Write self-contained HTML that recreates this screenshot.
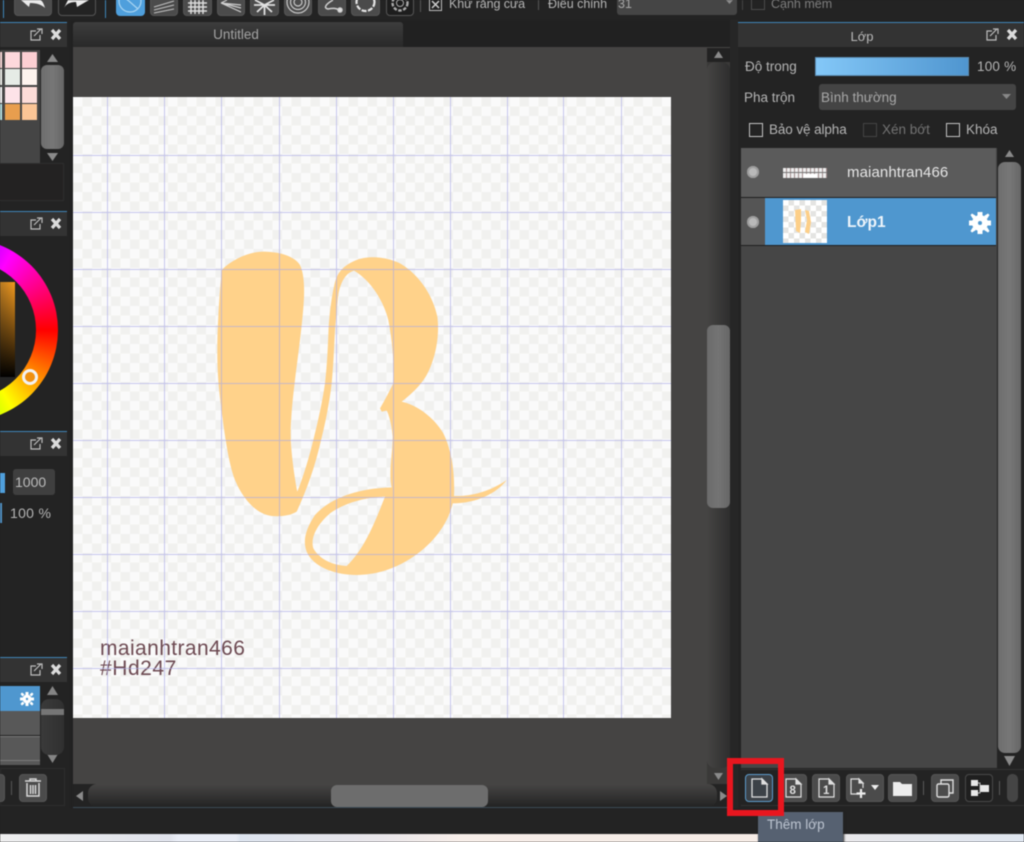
<!DOCTYPE html>
<html><head><meta charset="utf-8"><style>
html,body{margin:0;padding:0;background:#212121;width:1024px;height:842px;overflow:hidden}
body{position:relative;font-family:"Liberation Sans",sans-serif;color:#b5b5b5;font-size:13.5px;filter:blur(.45px)}
.a,.t,.b{position:absolute}
.t{white-space:nowrap;line-height:16px}
.b{background:#4b4b4b;border-radius:4px;box-sizing:border-box;border:1px solid #555}
.blue{position:absolute;height:1px;background:#3f85b8}
.hd{position:absolute;background:#333}
.sq{position:absolute;width:15px;height:16px}
svg{position:absolute;overflow:visible}
.cb{position:absolute;width:12px;height:12px;border:1px solid #c4c4c4;box-sizing:content-box}
</style></head><body>

<!-- top toolbar -->
<div class="a" style="left:0;top:0;width:1024px;height:20px;background:#232323"></div>
<div class="a" style="left:3px;top:0;width:1px;height:18px;background:#3f85b8"></div>
<div class="a" style="left:105px;top:0;width:1px;height:18px;background:#3f85b8"></div>
<div class="b" style="left:14px;top:-6px;width:38px;height:22px"></div>
<svg style="left:14px;top:0" width="38" height="16"><path d="M7 0 L15 7 L16 3 C23 3 28 5 31 8 C30 4 28 0 26 0 Z" fill="#eaeaea"/></svg>
<div class="b" style="left:58px;top:-6px;width:38px;height:22px;background:#232323"></div>
<svg style="left:58px;top:0" width="38" height="16"><path d="M6 8 C8 4 12 2 18 2 L19 7 L31 0 H10 Z" fill="#eaeaea"/></svg>
<div class="b" style="left:116px;top:-6px;width:29px;height:22px;background:#4f9fdc;border-color:#4f9fdc"></div>
<svg style="left:116px;top:0" width="29" height="16" fill="none" stroke="#a8d4f2" stroke-width="1.2"><circle cx="14" cy="1" r="11"/><path d="M6 -5 L22 9"/></svg>
<div class="b" style="left:150px;top:-6px;width:28px;height:22px"></div>
<svg style="left:150px;top:0" width="28" height="16" stroke="#c2c2c2" stroke-width="1.1"><path d="M4 7 L24 1 M4 10 L24 5 M4 13 L24 9"/></svg>
<div class="b" style="left:183px;top:-6px;width:29px;height:22px"></div>
<svg style="left:183px;top:0" width="29" height="16" stroke="#dcdcdc" stroke-width="1.5"><path d="M5 3 H24 M5 7 H24 M5 11 H24 M8 0 V14 M12 0 V14 M16 0 V14 M20 0 V14"/></svg>
<div class="b" style="left:217px;top:-6px;width:28px;height:22px"></div>
<svg style="left:217px;top:0" width="28" height="16" stroke="#cfcfcf" stroke-width="1.2"><path d="M4 3 L24 12 M4 3 L24 8 M4 3 L24 5 M10 0 L4 3"/></svg>
<div class="b" style="left:250px;top:-6px;width:29px;height:22px"></div>
<svg style="left:250px;top:0" width="29" height="16" stroke="#e0e0e0" stroke-width="1.8"><path d="M14.500 5 V15 M14.500 5 L5 0 M14.500 5 L24 0 M14.500 5 L7 12 M14.500 5 L22 12 M4 5 H25"/></svg>
<div class="b" style="left:284px;top:-6px;width:28px;height:22px"></div>
<svg style="left:284px;top:0" width="28" height="16" fill="none" stroke="#c8c8c8" stroke-width="1.2"><circle cx="14" cy="2" r="11"/><circle cx="14" cy="2" r="7.500"/><circle cx="14" cy="2" r="4"/></svg>
<div class="b" style="left:318px;top:-6px;width:28px;height:22px"></div>
<svg style="left:318px;top:0" width="28" height="16" fill="none" stroke="#d0d0d0" stroke-width="1.5"><path d="M15 0 C8 4 5 8 10 9 C15 8 18 8 21 10"/><circle cx="22" cy="10" r="2" fill="#e0e0e0"/></svg>
<div class="b" style="left:351px;top:-6px;width:29px;height:22px"></div>
<svg style="left:351px;top:0" width="29" height="16" fill="none" stroke="#e4e4e4" stroke-width="2.200" stroke-dasharray="5 1.500"><circle cx="14.500" cy="2" r="9"/></svg>
<div class="b" style="left:386px;top:-6px;width:28px;height:22px;background:#1d1d1d"></div>
<svg style="left:386px;top:0" width="28" height="16" fill="none" stroke="#aaa" stroke-width="2.400"><circle cx="14" cy="3" r="7.500" stroke-dasharray="3.500 1.500"/><circle cx="14" cy="3" r="3.500" stroke-width="1"/></svg>
<div class="a" style="left:420px;top:0;width:1px;height:12px;background:#555"></div>
<div class="a" style="left:429px;top:-2px;width:11px;height:11px;border:1px solid #bbb"></div>
<svg style="left:429px;top:-2px" width="13" height="13" stroke="#ccc" stroke-width="1.500"><path d="M3 3 L10 10 M10 3 L3 10"/></svg>
<div class="t" style="left:449px;top:-4px;font-size:12.500px;letter-spacing:-.1px">Khử răng cưa</div>
<div class="a" style="left:538px;top:0;width:1px;height:10px;background:#555"></div>
<div class="t" style="left:548px;top:-4px;font-size:12.500px">Điều chỉnh</div>
<div class="a" style="left:617px;top:-8px;width:120px;height:23px;background:#454545;border-radius:3px"></div>
<div class="t" style="left:618px;top:-4px;font-size:12.500px;color:#a8a8a8">31</div>
<svg style="left:725px;top:0" width="10" height="8"><path d="M1 0 H8 L4.500 4 Z" fill="#8a8a8a"/></svg>
<div class="a" style="left:742px;top:0;width:1px;height:10px;background:#444"></div>
<div class="a" style="left:751px;top:-4px;width:12px;height:12px;border:1px solid #4a4a4a"></div>
<div class="t" style="left:771px;top:-4px;font-size:12.500px;color:#7e7e7e">Cạnh mềm</div>

<!-- left panels -->
<div class="a" style="left:0;top:20px;width:70px;height:788px;background:#232323"></div>
<div class="blue" style="left:0;top:22px;width:67px"></div>
<div class="hd" style="left:0;top:23px;width:67px;height:24px"></div>
<div class="a" style="left:0;top:50px;width:40px;height:113px;background:#454545"></div>
<div class="sq" style="left:0;top:52px;width:2px;background:#fdd"></div>
<div class="sq" style="left:5px;top:52px;background:#fdd8dc"></div><div class="sq" style="left:22px;top:52px;background:#fccfd3"></div>
<div class="sq" style="left:0;top:69px;width:2px;background:#f4f4f0"></div>
<div class="sq" style="left:5px;top:69px;background:#e6ebe6"></div><div class="sq" style="left:22px;top:69px;background:#fdf3ee"></div>
<div class="sq" style="left:0;top:87px;width:2px;background:#fff"></div>
<div class="sq" style="left:5px;top:87px;background:#fde3e8"></div><div class="sq" style="left:22px;top:87px;background:#fcdcd8"></div>
<div class="sq" style="left:0;top:104px;width:2px;background:#b8e4e6"></div>
<div class="sq" style="left:5px;top:104px;background:#e89e4e"></div><div class="sq" style="left:22px;top:104px;background:#fbc596"></div>
<svg style="left:41px;top:50px" width="24" height="114" fill="#8a8a8a"><path d="M11.500 4 L17 12 H6 Z M6 103 H17 L11.500 111 Z"/></svg>
<div class="a" style="left:41px;top:65px;width:23px;height:84px;background:linear-gradient(90deg,#6e6e6e,#777 50%,#666);border-radius:6px"></div>
<div class="a" style="left:-2px;top:163px;width:66px;height:38px;background:#232222;border:1px solid #2e2e2e;box-sizing:border-box"></div>

<div class="blue" style="left:0;top:211px;width:67px"></div>
<div class="hd" style="left:0;top:212px;width:67px;height:24px"></div>
<div class="a" style="left:-124px;top:239px;width:182px;height:182px;border-radius:50%;background:conic-gradient(from 90deg,#f00,#ff0 60deg,#0f0 120deg,#0ff 180deg,#00f 240deg,#f0f 300deg,#f00 360deg)"></div>
<div class="a" style="left:-102px;top:261px;width:138px;height:138px;border-radius:50%;background:#232323"></div>
<div class="a" style="left:0;top:282px;width:15px;height:95px;background:linear-gradient(180deg,rgba(0,0,0,0),#000),linear-gradient(90deg,#b87a22,#f39a1e)"></div>
<div class="a" style="left:22px;top:369px;width:10px;height:10px;border:3px solid #f2f2f2;border-radius:50%;background:#f09010"></div>

<div class="blue" style="left:0;top:431px;width:67px"></div>
<div class="hd" style="left:0;top:432px;width:67px;height:24px"></div>
<div class="a" style="left:0;top:473px;width:5px;height:20px;background:#4f9fdc"></div>
<div class="a" style="left:13px;top:469px;width:42px;height:26px;background:#3f3f3f;border-radius:3px"></div>
<div class="t" style="left:15px;top:474px;font-size:14px;color:#bcbcbc">1000</div>
<div class="a" style="left:0;top:503px;width:2px;height:20px;background:#4f90c4"></div>
<div class="t" style="left:10px;top:505px;font-size:14px;letter-spacing:.3px">100 %</div>

<div class="blue" style="left:0;top:657px;width:67px"></div>
<div class="hd" style="left:0;top:658px;width:67px;height:24px"></div>
<div class="a" style="left:0;top:686px;width:40px;height:25px;background:#4f97cf"></div>
<div class="a" style="left:0;top:711px;width:40px;height:24px;background:#585858"></div>
<div class="a" style="left:0;top:736px;width:40px;height:24px;background:#585858;border-top:1px solid #7a7a7a;box-sizing:border-box"></div>
<div class="a" style="left:0;top:760px;width:40px;height:5px;background:#585858;border-top:1px solid #7a7a7a;box-sizing:border-box"></div>
<svg style="left:20px;top:692px" width="14" height="14"><g fill="#fff"><circle cx="7" cy="7" r="4.500"/><path d="M5.500 0 H8.500 V14 H5.500 Z M0 5.500 H14 V8.500 H0 Z M2 0.500 L4.500 2.500 L2.500 4.500 L0.500 2 Z M12 0.500 L13.500 2 L11.500 4.500 L9.500 2.500 Z M2 13.500 L0.500 12 L2.500 9.500 L4.500 11.500 Z M12 13.500 L9.500 11.500 L11.500 9.500 L13.500 12 Z"/></g><circle cx="7" cy="7" r="1.200" fill="#4f97cf"/></svg>
<svg style="left:41px;top:686px" width="24" height="80" fill="#858585"><path d="M11.500 0 L17 9 H6 Z M6 68 H17 L11.500 77 Z"/></svg>
<div class="a" style="left:41px;top:699px;width:23px;height:56px;background:linear-gradient(90deg,#3a3a3a,#303030);border-radius:8px"></div>
<div class="a" style="left:41px;top:709px;width:23px;height:6px;background:#767676"></div>
<div class="a" style="left:0;top:768px;width:65px;height:38px;border:1px solid #2d2d2d;box-sizing:border-box"></div>
<div class="b" style="left:-10px;top:774px;width:15px;height:28px"></div>
<div class="a" style="left:11px;top:781px;width:1px;height:14px;background:#555"></div>
<div class="b" style="left:19px;top:774px;width:28px;height:28px"></div>
<svg style="left:19px;top:774px" width="28" height="28" fill="none" stroke="#d8d8d8" stroke-width="1.500"><path d="M6 7 H22 M11 7 V5 H17 V7 M8 9 V22 H20 V9 M11.500 11 V20 M14 11 V20 M16.500 11 V20"/></svg>

<!-- header icons -->
<svg style="left:0;top:0" width="1024" height="700" fill="none">
<g stroke="#bdbdbd" stroke-width="1.200">
<path d="M36 31 H31 V40 H40 V35 M34 36 L41 29 M37 29 H42 V34"/>
<path d="M36 220 H31 V229 H40 V224 M34 225 L41 218 M37 218 H42 V223"/>
<path d="M36 440 H31 V449 H40 V444 M34 445 L41 438 M37 438 H42 V443"/>
<path d="M36 666 H31 V675 H40 V670 M34 671 L41 664 M37 664 H42 V669"/>
</g>
<g stroke="#dcdcdc" stroke-width="3.200">
<path d="M52 30 L60 39 M60 30 L52 39"/>
<path d="M52 219 L60 228 M60 219 L52 228"/>
<path d="M52 439 L60 448 M60 439 L52 448"/>
<path d="M52 665 L60 674 M60 665 L52 674"/>
</g>
</svg>

<!-- centre -->
<div class="a" style="left:73px;top:22px;width:330px;height:25px;background:linear-gradient(180deg,#3d3d3d,#292929);border-radius:3px 3px 0 0"></div>
<div class="t" style="left:73px;top:27px;width:326px;text-align:center;color:#a3a3a3;font-size:13.500px">Untitled</div>
<div class="a" style="left:73px;top:47px;width:657px;height:761px;background:#454443"></div>

<!-- canvas -->
<div class="a" style="left:73px;top:97px;width:598px;height:621px;background:repeating-conic-gradient(#f1f1ef 0 25%,#fafafa 0 50%) 0 0/19px 19px"></div>
<svg style="left:200px;top:240px" width="320" height="345" viewBox="0 0 960 1035">
<path fill-rule="evenodd" fill="#ffd28a" d="M65 90 C100 55 150 35 190 35 C240 35 285 50 300 75 C312 100 313 140 312 170 C310 230 295 340 285 420 C275 500 270 570 273 610 C276 660 285 720 292 755 C310 710 328 650 340 600 C355 540 368 480 375 430 C382 370 384 310 386 260 C390 210 395 170 402 140 C410 100 425 80 465 62 C500 45 560 50 600 70 C660 105 700 170 712 230 C720 290 705 360 680 405 C660 440 630 465 605 485 C650 495 700 530 730 580 C755 630 765 700 762 768 C810 770 870 755 920 720 C890 760 830 790 758 790 C745 850 700 910 640 950 C590 985 530 1005 470 1005 C410 1005 350 985 325 945 C305 910 315 870 345 825 C390 775 470 745 575 742 C565 700 578 640 578 590 C575 550 565 520 560 512 L545 515 L540 505 C555 480 570 450 580 430 C582 380 580 320 565 240 C550 180 510 120 462 92 C435 100 420 130 414 170 C410 210 408 240 405 270 C402 330 400 380 395 430 C388 490 376 550 362 605 C345 680 320 750 290 815 C270 828 240 830 215 828 C170 822 130 780 105 720 C85 670 72 570 62 490 C50 400 50 320 55 230 C58 170 62 130 65 90 Z M555 770 C520 860 490 930 440 978 C400 975 360 960 340 925 C330 890 355 850 390 820 C440 785 500 772 555 770 Z"/>
</svg>
<div class="t" style="left:100px;top:638px;font-size:21px;line-height:22px;color:#6d4a52;letter-spacing:.4px">maianhtran466</div>
<div class="t" style="left:100px;top:658px;font-size:21px;line-height:22px;color:#6d4a52;letter-spacing:.55px">#Hd247</div>
<svg style="left:73px;top:97px" width="598" height="621" stroke="#a8a8e6" stroke-opacity=".62" stroke-width="1">
<path d="M34.500 0V621M91.500 0V621M148.500 0V621M206.500 0V621M263.500 0V621M320.500 0V621M377.500 0V621M434.500 0V621M490.500 0V621M548.500 0V621M0 58.500H598M0 115.500H598M0 172.500H598M0 229.500H598M0 286.500H598M0 343.500H598M0 400.500H598M0 457.500H598M0 514.500H598M0 571.500H598"/>
</svg>

<!-- v scrollbar -->
<div class="a" style="left:707px;top:48px;width:23px;height:736px;background:#3a3938"></div>
<div class="a" style="left:707px;top:48px;width:23px;height:14px;background:#222"></div>
<div class="a" style="left:707px;top:62px;width:23px;height:706px;background:linear-gradient(90deg,#454443,#2e2e2e);border-radius:8px"></div>
<div class="a" style="left:707px;top:325px;width:23px;height:183px;background:linear-gradient(90deg,#6b6b6b,#747474 50%,#666);border-radius:6px"></div>
<svg style="left:707px;top:48px" width="23" height="736" fill="#8a8a8a"><path d="M11.500 3 L16 10 H7 Z M7 725 H16 L11.500 732 Z"/></svg>
<div class="a" style="left:730px;top:20px;width:8px;height:788px;background:#262626"></div>

<!-- h scrollbar -->
<div class="a" style="left:73px;top:784px;width:657px;height:24px;background:#232323;border-bottom:1px solid #3b4a55;box-sizing:border-box"></div>
<div class="a" style="left:88px;top:784px;width:629px;height:23px;background:linear-gradient(180deg,#464544,#232323);border-radius:9px"></div>
<div class="a" style="left:331px;top:785px;width:157px;height:22px;background:#6d6d6d;border-radius:6px"></div>
<svg style="left:73px;top:784px" width="657" height="24" fill="#8a8a8a"><path d="M3 12 L10 7 V17 Z M654 12 L647 7 V17 Z"/></svg>

<!-- right panel -->
<div class="a" style="left:738px;top:20px;width:286px;height:788px;background:#232323"></div>
<div class="blue" style="left:738px;top:22px;width:286px"></div>
<div class="hd" style="left:738px;top:23px;width:286px;height:24px"></div>
<div class="t" style="left:738px;top:29px;width:248px;text-align:center;font-size:13px;color:#bbb">Lớp</div>
<svg style="left:0;top:0" width="1024" height="60" fill="none"><path stroke="#bdbdbd" stroke-width="1.200" d="M992 31 H987 V40 H996 V35 M990 36 L997 29 M993 29 H998 V34"/><path stroke="#dcdcdc" stroke-width="3.200" d="M1008 30 L1016 39 M1016 30 L1008 39"/></svg>
<div class="t" style="left:745px;top:59px">Độ trong</div>
<div class="a" style="left:815px;top:57px;width:154px;height:19px;background:linear-gradient(90deg,#84c8f8,#4f95cf);box-shadow:inset 0 0 0 1px #5b8db3"></div>
<div class="t" style="left:977px;top:59px;letter-spacing:.2px">100 %</div>
<div class="t" style="left:744px;top:90px">Pha trộn</div>
<div class="a" style="left:819px;top:84px;width:197px;height:26px;background:#444;border-radius:3px"></div>
<div class="t" style="left:821px;top:90px;color:#a8a8a8">Bình thường</div>
<svg style="left:1001px;top:94px" width="12" height="8"><path d="M1 0 H10 L5.500 5 Z" fill="#888"/></svg>
<div class="cb" style="left:749px;top:123px"></div>
<div class="t" style="left:769px;top:122px;font-size:13.500px;letter-spacing:-.1px">Bảo vệ alpha</div>
<div class="cb" style="left:863px;top:123px;border-color:#444"></div>
<div class="t" style="left:882px;top:122px;color:#737373;font-size:13.500px">Xén bớt</div>
<div class="cb" style="left:946px;top:123px"></div>
<div class="t" style="left:966px;top:122px;font-size:13.500px">Khóa</div>

<div class="a" style="left:741px;top:148px;width:256px;height:620px;background:#464646"></div>
<div class="a" style="left:741px;top:148px;width:255px;height:49px;background:#5b5b5b"></div>
<div class="a" style="left:741px;top:197px;width:255px;height:1px;background:#1f1f1f"></div>
<div class="a" style="left:741px;top:198px;width:24px;height:47px;background:#555"></div>
<div class="a" style="left:765px;top:198px;width:231px;height:47px;background:#4f97cf"></div>
<div class="a" style="left:741px;top:245px;width:255px;height:1px;background:#1f1f1f"></div>
<div class="a" style="left:747px;top:166px;width:12px;height:12px;background:#b9b9b9;border-radius:50%;box-shadow:inset 0 0 0 2px #9d9d9d"></div>
<div class="a" style="left:747px;top:216px;width:12px;height:12px;background:#b9b9b9;border-radius:50%;box-shadow:inset 0 0 0 2px #9d9d9d"></div>
<div class="a" style="left:783px;top:168px;width:44px;height:10px;background:repeating-linear-gradient(90deg,#eee 0 3px,#a08a8a 3px 4px)"></div>
<div class="a" style="left:783px;top:172px;width:44px;height:1px;background:#777"></div>
<div class="a" style="left:803px;top:174px;width:14px;height:4px;background:#fff"></div>
<div class="t" style="left:847px;top:165px;font-size:15px;color:#e6e6e6;letter-spacing:.1px">maianhtran466</div>
<div class="a" style="left:783px;top:200px;width:44px;height:43px;background:repeating-conic-gradient(#e4e4e2 0 25%,#fff 0 50%) 0 0/11px 11px"></div>
<svg style="left:783px;top:200px" width="44" height="43" fill="#fdcf88"><path d="M12 10 L18 9 L18 20 L17 33 L13 31 Z M22 10 L26 11 L28 22 L26 34 L22 32 L24 20 Z"/></svg>
<div class="t" style="left:847px;top:215px;font-size:15.500px;font-weight:bold;color:#eef5fb">Lớp1</div>
<svg style="left:968px;top:211px" width="24" height="24"><g fill="#fff"><circle cx="12" cy="12" r="8"/><path d="M9.500 1 H14.500 V23 H9.500 Z M1 9.500 H23 V14.500 H1 Z M4 2.500 L8 5 L5 8 L2.500 4 Z M20 2.500 L21.500 4 L19 8 L16 5 Z M4 21.500 L2.500 20 L5 16 L8 19 Z M20 21.500 L16 19 L19 16 L21.500 20 Z"/></g><circle cx="12" cy="12" r="2" fill="#4f97cf"/></svg>

<div class="a" style="left:998px;top:162px;width:23px;height:591px;background:linear-gradient(90deg,#6e6e6e,#777 50%,#666);border-radius:7px"></div>
<svg style="left:998px;top:148px" width="23" height="622" fill="#8a8a8a"><path d="M11.500 2 L16 9 H7 Z M6 608 H17 L11.500 618 Z"/></svg>

<!-- layer toolbar -->
<div class="a" style="left:741px;top:769px;width:283px;height:1px;background:#333"></div>
<div class="a" style="left:741px;top:805px;width:283px;height:1px;background:#333"></div>
<div class="b" style="left:745px;top:774px;width:28px;height:28px;background:#3c4248;border-color:#5c9ccc"></div>
<svg style="left:745px;top:774px" width="28" height="28" fill="none" stroke="#dfdfdf" stroke-width="1.300"><path d="M7 5 H17 L22 10 V23 H7 Z"/><path d="M17 5 L22 10 H17 Z" fill="#dfdfdf"/></svg>
<div class="b" style="left:779px;top:774px;width:28px;height:28px"></div>
<svg style="left:779px;top:774px" width="28" height="28" fill="none" stroke="#dfdfdf" stroke-width="1.200"><path d="M7 5 H17 L22 10 V23 H7 Z"/><path d="M17 5 L22 10 H17 Z" fill="#dfdfdf"/><text x="10.500" y="20" font-size="11.500" font-weight="bold" fill="#dfdfdf" stroke="none" font-family="Liberation Sans">8</text></svg>
<div class="b" style="left:812px;top:774px;width:28px;height:28px"></div>
<svg style="left:812px;top:774px" width="28" height="28" fill="none" stroke="#dfdfdf" stroke-width="1.200"><path d="M7 5 H17 L22 10 V23 H7 Z"/><path d="M17 5 L22 10 H17 Z" fill="#dfdfdf"/><text x="11" y="20" font-size="11.500" font-weight="bold" fill="#dfdfdf" stroke="none" font-family="Liberation Sans">1</text></svg>
<div class="b" style="left:846px;top:774px;width:38px;height:28px"></div>
<svg style="left:846px;top:774px" width="38" height="28" fill="none" stroke="#dfdfdf" stroke-width="1.200"><path d="M13 20 H5 V5 H13 L17 9 V14"/><path d="M13 5 L17 9 H13 Z" fill="#dfdfdf"/><path d="M15 15 V24 M10.500 19.500 H19.500" stroke-width="2.200" stroke="#eee"/><path d="M25 11 H33 L29 16 Z" fill="#eee" stroke="none"/></svg>
<div class="b" style="left:888px;top:774px;width:29px;height:28px"></div>
<svg style="left:888px;top:774px" width="29" height="28"><path d="M5 8 L5 22 H24 V10 H14 L12 8 Z" fill="#ececec"/></svg>
<div class="a" style="left:923px;top:781px;width:1px;height:14px;background:#5a5a5a"></div>
<div class="b" style="left:931px;top:774px;width:28px;height:28px"></div>
<svg style="left:931px;top:774px" width="28" height="28" fill="none" stroke="#dfdfdf" stroke-width="1.400"><rect x="6" y="10" width="12" height="13" rx="1.500"/><path d="M10 10 V6 H22 V19 H18"/></svg>
<div class="b" style="left:965px;top:774px;width:28px;height:28px;background:#1f1f1f;border-color:#4a4a4a"></div>
<svg style="left:965px;top:774px" width="28" height="28" fill="#e8e8e8"><rect x="6" y="6" width="7" height="6"/><rect x="6" y="16" width="7" height="6"/><rect x="15" y="11" width="9" height="7"/><path d="M13 9 H15 V19 H13" fill="none" stroke="#bbb"/></svg>
<div class="a" style="left:999px;top:781px;width:1px;height:14px;background:#5a5a5a"></div>
<div class="a" style="left:1007px;top:774px;width:11px;height:28px;background:#454545;border-radius:5px"></div>

<!-- bottom -->
<div class="a" style="left:0;top:808px;width:1024px;height:26px;background:#232323"></div>
<div class="a" style="left:0;top:834px;width:1024px;height:8px;background:linear-gradient(90deg,#eeeeee 0,#e0e3ec 170px,#e9edf6 178px,#e9edf6 236px,#dde4ef 240px,#e9e6ea 380px,#f7eee9 460px,#f6ece6 760px,#e8e8ec 860px,#dfe6f0 1024px)"></div>

<!-- tooltip -->
<div class="a" style="left:758px;top:812px;width:85px;height:30px;background:#566171;box-shadow:1px 1px 2px #222"></div>
<div class="t" style="left:767px;top:817px;color:#bcc4d0;font-size:13.500px">Thêm lớp</div>
<!-- red highlight -->
<div class="a" style="left:727px;top:758px;width:57px;height:58px;border:6px solid #e8161f;box-sizing:border-box"></div>
</body></html>
